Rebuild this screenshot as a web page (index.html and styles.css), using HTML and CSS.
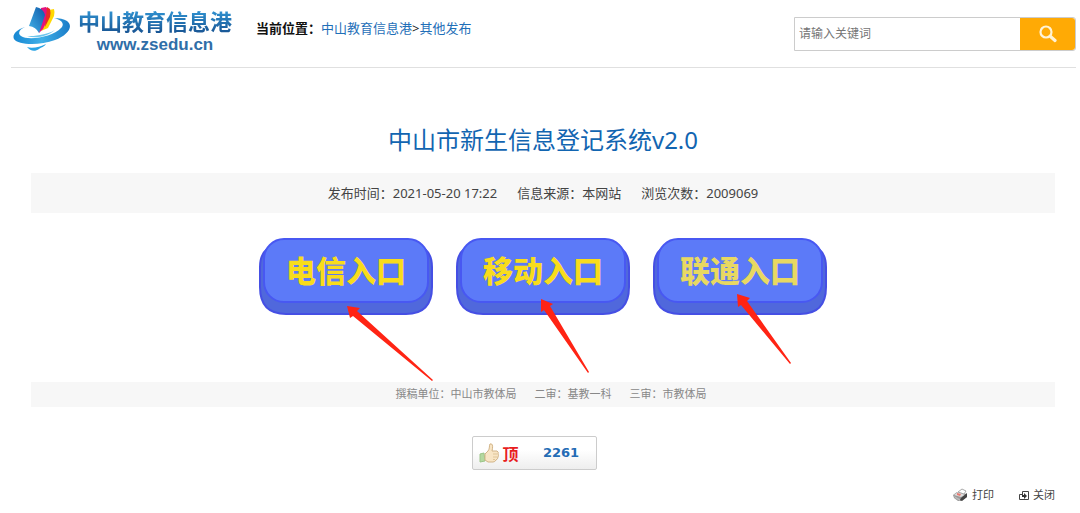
FILE: index.html
```html
<!DOCTYPE html>
<html lang="zh-CN">
<head>
<meta charset="utf-8">
<title>中山市新生信息登记系统v2.0</title>
<link rel="stylesheet" href="styles.css">
</head>
<body>
<svg class="defs" aria-hidden="true">
  <defs>
    <linearGradient id="swoosh" x1="0" y1="0" x2="1" y2="0"><stop offset="0" stop-color="#1787d2"/><stop offset=".5" stop-color="#3fb0e8"/><stop offset="1" stop-color="#1a7cc8"/></linearGradient>
    <linearGradient id="page" x1="0" y1="1" x2="1" y2="0"><stop offset="0" stop-color="#45b4ea"/><stop offset="1" stop-color="#0d58a8"/></linearGradient>
    <symbol id="plate" viewBox="0 0 176 78">
      <path d="M9 12Q2 18 2 30V50Q2 77 28 77H148Q174 77 174 50V30Q174 18 167 12Z" fill="#5068dc" stroke="#454fe4" stroke-width="2"/>
      <rect x="6" y="2" width="164" height="63" rx="20" fill="#5c7af8" stroke="#4858f2" stroke-width="2"/>
    </symbol>
  </defs>
</svg>
<header class="header">
  <a class="logo" href="#">
    <svg class="logo-mark" viewBox="0 0 60 48" aria-hidden="true">
      <path d="M12 21C3 24-1 29 1 33C5 39 26 40 42 34C55 29 61 20 54 15C51 13 46 12 41 12C49 14 52 18 48 22C40 31 15 35 8 30C4 27 7 23 12 21Z" fill="url(#swoosh)"/>
      <path d="M14 30C24 33 35 30 42 24C37 27 32 28 27 29C23 30 18 30 14 30Z" fill="#6cc6ee"/>
      <path d="M14 41C19 43 27 41 33 38C31 41 29 41 26 43C22 46 17 45 14 41Z" fill="#2aa4e4"/>
      <path d="M28 25L36 4L41 3Q42 6 41 10L35 22Z" fill="#ffd800"/>
      <path d="M26 27L28 2L33 1Q37 5 36 11L30 23Z" fill="#e3127e"/>
      <path d="M34 1L37 3Q38 7 37 11L32 21Z" fill="#e92b24"/>
      <path d="M16 20L23 1Q30 2 32 9L26 27Q23 21 16 20Z" fill="url(#page)"/>
    </svg>
    <span class="logo-words">
      <span class="logo-name">中山教育信息港</span>
      <span class="logo-url">www.zsedu.cn</span>
    </span>
  </a>
  <nav class="crumbs"><strong>当前位置：</strong><a href="#">中山教育信息港</a>&gt;<a href="#">其他发布</a></nav>
  <form class="search">
    <input type="text" placeholder="请输入关键词" aria-label="请输入关键词">
    <button type="button" aria-label="搜索">
      <svg viewBox="0 0 18 18" aria-hidden="true"><circle cx="7" cy="7" r="5.5" fill="none" stroke="#fff3d6" stroke-width="2.2"/><path d="M11.500 11.500L16 15.500" stroke="#fff3d6" stroke-width="3.200" stroke-linecap="round"/></svg>
    </button>
  </form>
</header>
<main class="article">
  <h1>中山市新生信息登记系统v2.0</h1>
  <div class="meta"><span>发布时间：2021-05-20 17:22</span><span>信息来源：本网站</span><span>浏览次数：2009069</span></div>
  <div class="entries">
    <a class="entry" href="#">
      <svg class="plate" aria-hidden="true"><use href="#plate"/></svg>
      <span class="entry-text">电信入口</span>
      <svg class="arrow" viewBox="0 0 176 146" aria-hidden="true"><path d="M89 69L102 71L99 74L175 143L174 144L95 79L92 81Z" fill="#ff2414"/></svg>
    </a>
    <a class="entry" href="#">
      <svg class="plate" aria-hidden="true"><use href="#plate"/></svg>
      <span class="entry-text">移动入口</span>
      <svg class="arrow" viewBox="0 0 176 146" aria-hidden="true"><path d="M86 62L98 67L95 69L134 135L133 136L89 73L86 75Z" fill="#ff2414"/></svg>
    </a>
    <a class="entry entry-pale" href="#">
      <svg class="plate" aria-hidden="true"><use href="#plate"/></svg>
      <span class="entry-text">联通入口</span>
      <svg class="arrow" viewBox="0 0 176 146" aria-hidden="true"><path d="M85 57L98 61L95 64L139 126L138 127L89 68L86 70Z" fill="#ff2414"/></svg>
    </a>
  </div>
  <div class="review"><span>撰稿单位：中山市教体局</span><span>二审：基教一科</span><span>三审：市教体局</span></div>
  <div class="vote">
    <button class="like" type="button">
      <svg viewBox="0 0 20 20" aria-hidden="true">
        <path d="M1 11L5 10L6 18L1 19Z" fill="#b4d8a0" stroke="#9cc588"/>
        <path d="M6 11L9 8C11 6 10 2 11 1C14 0 14 4 13 8H18Q20 9 19 11Q20 12 19 14Q19 16 17 17Q16 19 14 19H9L6 17Z" fill="#f8e5c5" stroke="#d2b487"/>
        <path d="M14 11H18M14 14H18M14 16.500H16" stroke="#dfc598" fill="none"/>
      </svg>
      <span class="like-label">顶</span><span class="like-count">2261</span>
    </button>
  </div>
  <div class="tools">
    <a href="#"><svg class="printer" viewBox="0 0 15 14" aria-hidden="true"><path d="M0 7L4 4L14 6L14 9L8 13L5 13L1 10Z" fill="#999"/><path d="M1 7L5 4L12 7L8 9Z" fill="#ddd"/><path d="M5 4L9 1L13 3L11 6Z" fill="#fff" stroke="#aaa"/><path d="M1 8L7 11V13L2 10Z" fill="#bbb"/><path d="M7 12L8 10L14 5V9L9 13Z" fill="#444"/><path d="M4 5L8 6L7 8L4 7Z" fill="#e87870"/></svg>打印</a>
    <a href="#"><svg class="close" viewBox="0 0 10 11" aria-hidden="true"><path d="M3.500 4V1.500H9.500V9.500H.5V4.500H4" fill="none" stroke="#444"/><path d="M3 6H6" stroke="#333" stroke-width="2"/><path d="M5 3L8 6L5 9Z" fill="#333"/></svg>关闭</a>
  </div>
</main>
</body>
</html>
```
FILE: styles.css
```css
* { box-sizing: border-box; }
body {
  margin: 0;
  background: #fff;
  color: #333;
  font: 13px/20px "Noto Sans", "Noto Sans CJK SC", sans-serif;
}
a { color: #1f6fb8; text-decoration: none; }
svg { display: block; }
.defs { position: absolute; width: 0; height: 0; }

.header {
  display: flex;
  align-items: flex-start;
  height: 68px;
  margin: 0 4px 0 11px;
  border-bottom: 1px solid #e0e0e0;
}
.logo { display: flex; gap: 5px; padding: 6px 0 0 2px; }
.logo-mark { width: 60px; height: 48px; }
.logo-words { display: flex; flex-direction: column; align-items: center; padding-top: 2px; }
.logo-name {
  font-size: 22px;
  font-weight: 700;
  line-height: 27px;
  background: linear-gradient(#3299d8, #164f8e);
  background-clip: text;
  color: transparent;
}
.logo-url { font: 700 17px/20px "Liberation Sans", sans-serif; color: #2f6ea8; }
.crumbs { margin: 18px 0 0 24px; color: #222; white-space: nowrap; }
.crumbs strong { color: #111; }
.search {
  display: flex;
  width: 282px;
  height: 34px;
  margin: 17px 0 0 auto;
  border: 1px solid #ccc;
  border-radius: 0 3px 3px 0;
}
.search input {
  flex: 1;
  min-width: 0;
  padding: 0 4px;
  border: 0;
  font: inherit;
  font-size: 12px;
}
.search input::placeholder { color: #757575; }
.search button {
  display: grid;
  place-items: center;
  width: 55px;
  padding: 0;
  border: 0;
  border-radius: 0 3px 3px 0;
  background: #ffaa05;
}
.search svg { width: 18px; height: 18px; }

.article { margin: 0 25px 0 31px; }
h1 {
  margin: 0;
  padding: 54px 0 15px;
  color: #1265b1;
  font-size: 24px;
  font-weight: 400;
  line-height: 36px;
  text-align: center;
}
.meta, .review { display: flex; justify-content: center; background: #f7f7f7; }
.meta { gap: 20px; padding: 10px 0; color: #444; }
.entries { display: flex; justify-content: center; gap: 21px; padding: 24px 0 67px; }
.entry { position: relative; display: grid; place-items: center; width: 176px; height: 78px; }
.plate { grid-area: 1 / 1; width: 176px; height: 78px; }
.entry-text {
  position: relative;
  grid-area: 1 / 1;
  padding-bottom: 10px;
  color: #f8dc1c;
  font-size: 30px;
  font-weight: 900;
  line-height: 40px;
}
.entry-pale .entry-text { color: #e8d862; }
.arrow { position: absolute; top: 0; left: 0; width: 176px; height: 146px; pointer-events: none; }
.review { gap: 18px; padding: 2px 0 3px 16px; color: #888; font-size: 11px; }
.vote { display: flex; justify-content: center; padding: 29px 18px 0 0; }
.like {
  display: flex;
  align-items: center;
  width: 125px;
  height: 34px;
  padding: 0 6px;
  border: 1px solid #ccc;
  border-radius: 2px;
  background: linear-gradient(#fff 40%, #eee);
}
.like svg { width: 20px; height: 20px; }
.like-label { margin-left: 4px; color: #e81e1e; font: 700 16px/20px "Noto Sans CJK SC", sans-serif; }
.like-count { flex: 1; padding-left: 14px; color: #246cb5; font: 700 13px/20px "DejaVu Sans", sans-serif; }
.tools { display: flex; justify-content: flex-end; gap: 25px; padding-top: 15px; font-size: 11px; }
.tools a { display: flex; align-items: center; gap: 4px; color: #444; }
.printer { width: 15px; height: 14px; }
.close { width: 10px; height: 11px; }
```
